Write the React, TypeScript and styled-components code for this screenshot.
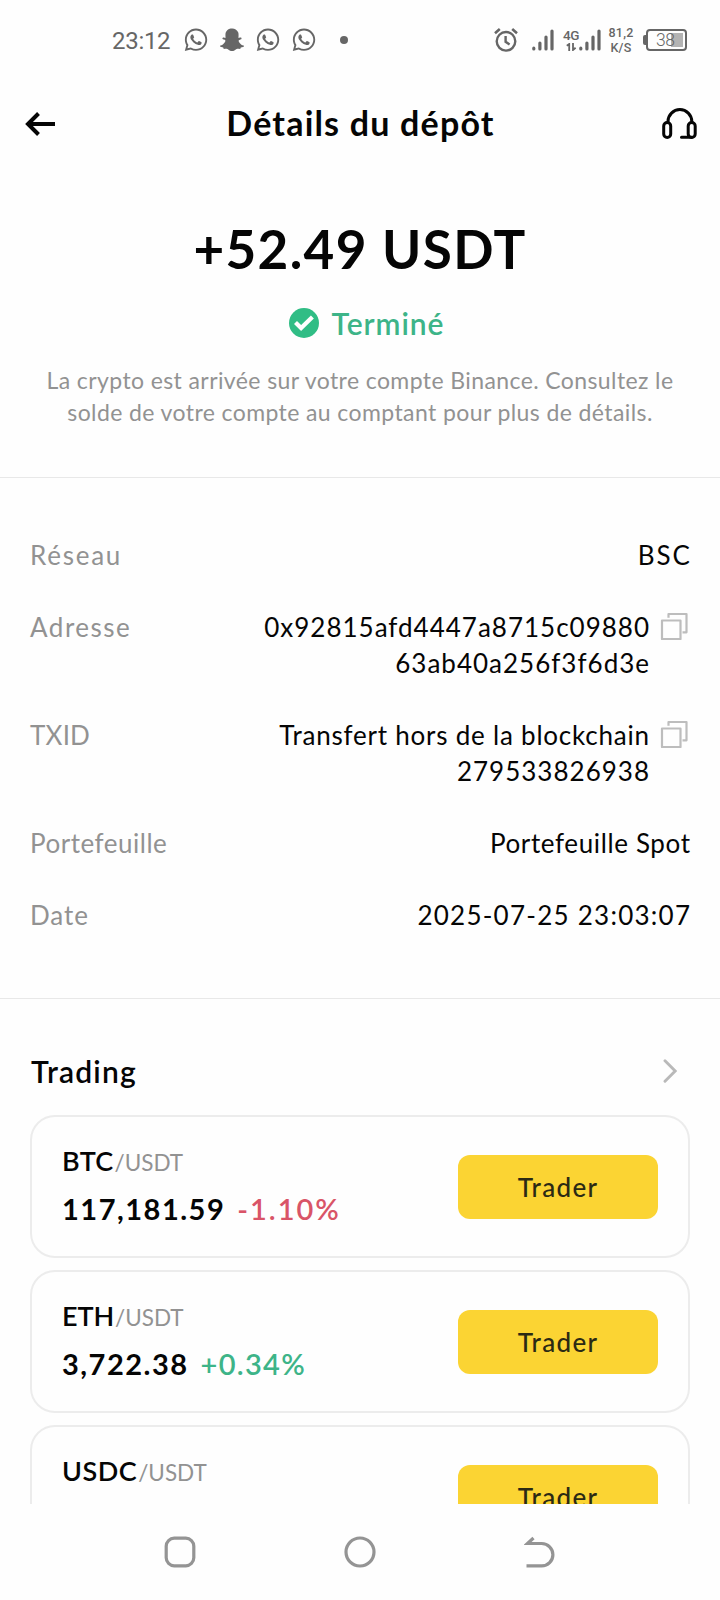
import React from 'react';
import styled, { createGlobalStyle } from 'styled-components';
import { FaWhatsapp, FaSnapchatGhost } from 'react-icons/fa';

const GlobalStyle = createGlobalStyle`
  * { box-sizing: border-box; }
  body { margin: 0; background: #fefefe; }
`;

const Screen = styled.div`
  display: flex;
  flex-direction: column;
  width: 720px;
  height: 1600px;
  overflow: hidden;
  background: #fefefe;
  color: #050505;
  font-family: Lato, "Open Sans", sans-serif;
  font-variant-ligatures: none;
`;

const StatusBar = styled.div`
  display: flex;
  flex: none;
  align-items: center;
  justify-content: space-between;
  height: 80px;
  padding: 0 33px 0 112px;
  color: #666;
  font-family: Roboto, sans-serif;
`;

const StatusGroup = styled.div<{ $gap?: number }>`
  display: flex;
  align-items: center;
  margin-left: ${(p) => p.$gap ?? 0}px;
`;

const Clock = styled.span`
  width: 72px;
  padding-top: 1px;
  font-size: 24px;
  line-height: 28px;
  letter-spacing: -0.3px;
`;

const Notifications = styled.div`
  display: flex;
  align-items: center;
  gap: 12px;

  > svg { width: 24px; height: 25.6px; }
`;

const Dot = styled.span`
  width: 8px;
  height: 8px;
  margin-left: 12px;
  border-radius: 50%;
  background: #666;
`;

const SpeedLabel = styled.div`
  display: flex;
  flex-direction: column;
  align-items: center;
  width: 26px;
  margin: 0 9px 0 7px;
  font-size: 12.5px;
  font-weight: 500;
  line-height: 15px;
  letter-spacing: 0.2px;
`;

const Battery = styled.div`
  display: flex;
  align-items: center;

  &::before {
    content: "";
    width: 3px;
    height: 10px;
    border-radius: 2px 0 0 2px;
    background: #666;
  }
`;

const BatteryBody = styled.div`
  display: flex;
  align-items: center;
  width: 41px;
  height: 22px;
  padding-left: 8px;
  border: 2px solid #666;
  border-radius: 4px;
  font-size: 17.5px;
  font-weight: 300;
  letter-spacing: -0.5px;
  background: linear-gradient(#b3b3b3, #b3b3b3) 23px center / 12px 14px no-repeat;
`;

const NetworkLabel = styled.div`
  display: flex;
  flex-direction: column;
  align-items: flex-start;
  width: 16px;
  height: 23px;
  font-size: 13.5px;
  font-weight: 500;
  line-height: 13px;
  letter-spacing: -0.4px;

  > svg { margin: 1px 0 0 3px; }
`;

const Header = styled.header`
  display: flex;
  flex: none;
  align-items: center;
  justify-content: space-between;
  height: 86px;
  padding: 0 23px 0 24px;

  svg { margin-top: 2px; }
`;

const Title = styled.h1`
  margin: 0;
  padding-left: 4px;
  font-size: 34px;
  font-weight: 700;
  line-height: 86px;
  letter-spacing: 1.2px;
`;

const IconButton = styled.button`
  display: flex;
  padding: 0;
  border: 0;
  background: none;
  color: inherit;
`;

const Summary = styled.section`
  display: flex;
  flex: none;
  flex-direction: column;
  align-items: center;
  height: 312px;
  padding-top: 51px;
  border-bottom: 1px solid #e8e8e8;
`;

const Amount = styled.div`
  font-size: 53px;
  font-weight: 700;
  line-height: 64px;
  letter-spacing: 1.35px;
`;

const Completion = styled.div`
  display: flex;
  align-items: center;
  gap: 13px;
  margin-top: 24px;
  padding-left: 13px;
  color: #3db488;
  font-size: 30px;
  font-weight: 600;
  line-height: 36px;
  letter-spacing: 0.93px;
`;

const Note = styled.p`
  margin: 23px 0 0;
  color: #929292;
  font-size: 23px;
  line-height: 32px;
  letter-spacing: 0.4px;
  text-align: center;
`;

const Details = styled.dl`
  display: flex;
  flex: none;
  flex-direction: column;
  gap: 36px;
  height: 521px;
  margin: 0;
  padding: 59px 30px 0;
  border-bottom: 1px solid #e8e8e8;
  font-size: 26px;
  line-height: 36px;
`;

const DetailRow = styled.div`
  display: flex;
  justify-content: space-between;
`;

const Term = styled.dt<{ $track: number }>`
  color: #929292;
  letter-spacing: ${(p) => p.$track}px;
`;

const Value = styled.dd`
  display: flex;
  align-items: flex-start;
  gap: 11px;
  margin: 0;
  text-align: right;
`;

const ValueLine = styled.div<{ $track: number }>`
  margin-right: ${(p) => -p.$track}px;
  letter-spacing: ${(p) => p.$track}px;
`;

const CopyButton = styled(IconButton)`
  margin: 3px 2px 0 0;
  color: #bdbdbd;
`;

const Trading = styled.section`
  display: flex;
  flex: 1;
  flex-direction: column;
  gap: 12px;
  min-height: 0;
  padding: 54px 30px 0;
  overflow: hidden;
`;

const TradingHeader = styled.div`
  display: flex;
  flex: none;
  align-items: center;
  justify-content: space-between;
  margin-bottom: 14px;
  padding-right: 13px;
  color: #b9b9b9;
`;

const TradingTitle = styled.h2`
  margin: 0;
  padding-left: 1px;
  color: #050505;
  font-size: 30px;
  font-weight: 600;
  line-height: 36px;
  letter-spacing: 1.2px;
`;

const Card = styled.article`
  display: flex;
  flex: none;
  align-items: flex-start;
  justify-content: space-between;
  height: 143px;
  padding: 28px 30px 0;
  border: 2px solid #ececec;
  border-radius: 25px;
`;

const Market = styled.div`
  display: flex;
  flex-direction: column;
  gap: 12px;
`;

const Pair = styled.div`
  display: flex;
  align-items: baseline;
  gap: 1px;
  line-height: 32px;
`;

const Base = styled.span<{ $track: number }>`
  font-size: 27px;
  font-weight: 600;
  letter-spacing: ${(p) => p.$track}px;
`;

const Quote = styled.span`
  color: #929292;
  font-size: 22.5px;
  letter-spacing: 0;
`;

const Prices = styled.div`
  display: flex;
  align-items: baseline;
  gap: 12px;
  line-height: 36px;
  font-size: 29px;
`;

const Price = styled.span`
  font-weight: 700;
  letter-spacing: 1.5px;
`;

const Change = styled.span<{ $up: boolean }>`
  color: ${(p) => (p.$up ? '#3db488' : '#d95467')};
  font-weight: 600;
  letter-spacing: ${(p) => (p.$up ? 1.3 : 2)}px;
`;

const TradeButton = styled.button`
  width: 200px;
  height: 64px;
  margin-top: 10px;
  padding: 0;
  border: 0;
  border-radius: 12px;
  background: #fbd433;
  color: #2b2a14;
  font-family: inherit;
  font-size: 26px;
  font-weight: 500;
  line-height: 61px;
  letter-spacing: 1.3px;
`;

const NavBar = styled.nav`
  display: flex;
  flex: none;
  align-items: center;
  justify-content: space-between;
  height: 96px;
  padding: 0 164px;
  color: #949494;
`;

const AlarmIcon = () => (
  <svg width="24" height="24" viewBox="0 0 24 24" fill="none" stroke="currentColor" strokeWidth="2.4">
    <circle cx="12" cy="13.3" r="9.3" />
    <path d="M11.6 8v5.8l4 2.6" />
    <path d="M1 5.2 5.8 1M23 5.2 18.2 1" strokeWidth="2.6" />
  </svg>
);

const SignalIcon = () => (
  <svg width="22" height="22" viewBox="0 0 22 22" stroke="currentColor" strokeWidth="3.2" strokeLinecap="round">
    <path d="M1.8 20v-.8M7.9 20v-6M14 20V8M20 20V2" />
  </svg>
);

const DataIcon = () => (
  <svg width="11" height="8" viewBox="0 0 11 8" fill="none" stroke="currentColor" strokeWidth="1.8">
    <path d="M.8 2.8 3.2 1v7M7 0v7l2.6-2.2" />
  </svg>
);

const BackIcon = () => (
  <svg width="32" height="26" viewBox="0 0 32 26" fill="none" stroke="currentColor" strokeWidth="4">
    <path d="M14.5 2.5 4 13l10.5 10.5M4 13h27" />
  </svg>
);

const SupportIcon = () => (
  <svg width="36" height="32" viewBox="0 0 36 32" fill="none" stroke="currentColor" strokeWidth="3" strokeLinecap="round">
    <path d="M7 14v-.5a11.9 11.9 0 0 1 23.800 0v.5" />
    <rect x="2.7" y="14.5" width="7" height="15" rx="3.5" />
    <rect x="27.2" y="14.5" width="7" height="15" rx="3.5" />
    <path d="M20.500 29.300h10" />
  </svg>
);

const CheckIcon = () => (
  <svg width="30" height="30" viewBox="0 0 30 30" fill="none">
    <circle cx="15" cy="15" r="15" fill="#30bd85" />
    <path d="m6.5 14.5 5.6 5.600L23.400 9" stroke="#fefefe" strokeWidth="4.2" />
  </svg>
);

const CopyIcon = () => (
  <svg width="28" height="28" viewBox="0 0 28 28" fill="none" stroke="currentColor" strokeWidth="2.2" strokeLinejoin="round">
    <path d="M2 8.500h18.500V27H2zM8.500 5.800V2H26.500v18.300h-4" />
  </svg>
);

const ChevronIcon = () => (
  <svg width="14" height="24" viewBox="0 0 14 24" fill="none" stroke="currentColor" strokeWidth="2.9" strokeLinecap="round">
    <path d="m2 1.800 10.200 10.200L2 22.200" />
  </svg>
);

const RecentsIcon = () => (
  <svg width="32" height="32" viewBox="0 0 32 32" fill="none" stroke="currentColor" strokeWidth="3.2">
    <rect x="2.2" y="2.2" width="27.6" height="27.6" rx="8" />
  </svg>
);

const HomeIcon = () => (
  <svg width="32" height="32" viewBox="0 0 32 32" fill="none" stroke="currentColor" strokeWidth="3.2">
    <circle cx="16" cy="16" r="14" />
  </svg>
);

const ReturnIcon = () => (
  <svg width="32" height="32" viewBox="0 0 32 32" fill="none" stroke="currentColor" strokeWidth="3.200">
    <path d="M9.500 2 3.500 7.500h14.200a11.200 11.200 0 0 1 0 22.400H2.500" />
  </svg>
);

type Detail = { term: string; track: number; lines: [string, number][]; copy?: boolean };

const details: Detail[] = [
  { term: 'Réseau', track: 1.75, lines: [['BSC', 2]] },
  {
    term: 'Adresse',
    track: 1.5,
    lines: [['0x92815afd4447a8715c09880', 1], ['63ab40a256f3f6d3e', 1]],
    copy: true,
  },
  {
    term: 'TXID',
    track: 0.2,
    lines: [['Transfert hors de la blockchain', 0.78], ['279533826938', 1.01]],
    copy: true,
  },
  { term: 'Portefeuille', track: 0.52, lines: [['Portefeuille Spot', 0.63]] },
  { term: 'Date', track: 0.9, lines: [['2025-07-25 23:03:07', 1.25]] },
];

const markets = [
  { base: 'BTC', track: 0.3, price: '117,181.59', change: '-1.10%', up: false },
  { base: 'ETH', track: -0.1, price: '3,722.38', change: '+0.34%', up: true },
  { base: 'USDC', track: 0.5, price: '', change: '', up: true },
];

export default function App() {
  return (
    <Screen>
      <GlobalStyle />
      <StatusBar>
        <StatusGroup>
          <Clock>23:12</Clock>
          <Notifications>
            <FaWhatsapp />
            <FaSnapchatGhost />
            <FaWhatsapp />
            <FaWhatsapp />
            <Dot />
          </Notifications>
        </StatusGroup>
        <StatusGroup>
          <AlarmIcon />
          <StatusGroup $gap={14}>
            <SignalIcon />
          </StatusGroup>
          <StatusGroup $gap={9}>
            <NetworkLabel>
              4G
              <DataIcon />
            </NetworkLabel>
            <SignalIcon />
          </StatusGroup>
          <SpeedLabel>
            <span>81,2</span>
            <span>K/S</span>
          </SpeedLabel>
          <Battery>
            <BatteryBody>38</BatteryBody>
          </Battery>
        </StatusGroup>
      </StatusBar>
      <Header>
        <IconButton aria-label="Retour"><BackIcon /></IconButton>
        <Title>Détails du dépôt</Title>
        <IconButton aria-label="Assistance"><SupportIcon /></IconButton>
      </Header>
      <Summary>
        <Amount>+52.49 USDT</Amount>
        <Completion>
          <CheckIcon />
          Terminé
        </Completion>
        <Note>
          La crypto est arrivée sur votre compte Binance. Consultez le
          <br />
          solde de votre compte au comptant pour plus de détails.
        </Note>
      </Summary>
      <Details>
        {details.map((d) => (
          <DetailRow key={d.term}>
            <Term $track={d.track}>{d.term}</Term>
            <Value>
              <div>
                {d.lines.map(([text, track]) => (
                  <ValueLine key={text} $track={track}>{text}</ValueLine>
                ))}
              </div>
              {d.copy && <CopyButton aria-label="Copier"><CopyIcon /></CopyButton>}
            </Value>
          </DetailRow>
        ))}
      </Details>
      <Trading>
        <TradingHeader>
          <TradingTitle>Trading</TradingTitle>
          <ChevronIcon />
        </TradingHeader>
        {markets.map((m) => (
          <Card key={m.base}>
            <Market>
              <Pair>
                <Base $track={m.track}>{m.base}</Base>
                <Quote>/USDT</Quote>
              </Pair>
              {m.price && (
                <Prices>
                  <Price>{m.price}</Price>
                  <Change $up={m.up}>{m.change}</Change>
                </Prices>
              )}
            </Market>
            <TradeButton>Trader</TradeButton>
          </Card>
        ))}
      </Trading>
      <NavBar>
        <RecentsIcon />
        <HomeIcon />
        <ReturnIcon />
      </NavBar>
    </Screen>
  );
}
